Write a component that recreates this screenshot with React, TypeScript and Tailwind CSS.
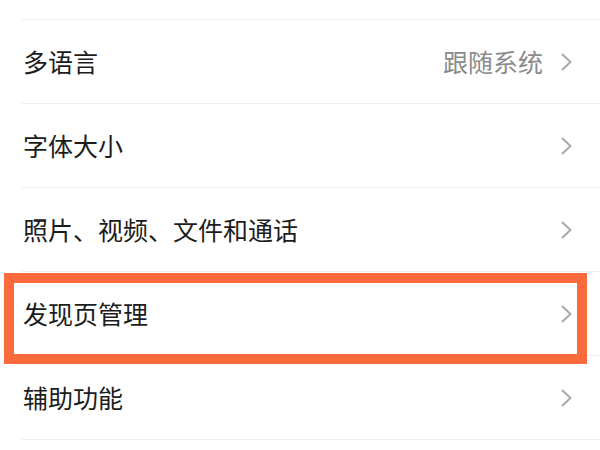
import React from 'react';

type Item = { label: string; value?: string; highlight?: boolean };

const items: Item[] = [
  { label: '多语言', value: '跟随系统' },
  { label: '字体大小' },
  { label: '照片、视频、文件和通话' },
  { label: '发现页管理', highlight: true },
  { label: '辅助功能' },
];

function Chevron() {
  return (
    <svg width="11" height="18" viewBox="0 0 11 18" className="shrink-0">
      <polyline points="1.5,1.5 9.5,9 1.5,16.5" fill="none" stroke="#a6a6a6" strokeWidth="1.8" strokeLinecap="round" strokeLinejoin="round" />
    </svg>
  );
}

export default function App() {
  return (
    <div
      className="w-[600px] h-[450px] bg-white overflow-hidden"
      style={{ fontFamily: '"Noto Sans CJK SC", "Noto Sans", sans-serif' }}
    >
      <div className="h-[20px] ml-[22px] border-b border-[#efefef]" />
      {items.map((item) => (
        <div key={item.label} className="relative">
          <div className="h-[84px] ml-[22px] border-b border-[#efefef] flex items-center pl-px pr-[28px]">
            <span className="flex-1 text-[25px] leading-none text-[#1c1c1c]">{item.label}</span>
            {item.value && (
              <span className="text-[25px] leading-none text-[#8a8a8a] mr-[18px]">{item.value}</span>
            )}
            <Chevron />
          </div>
          {item.highlight && (
            <div className="absolute left-[4px] right-[13px] top-[1px] h-[91px] border-[10px] border-[#f96b3c]" />
          )}
        </div>
      ))}
    </div>
  );
}
